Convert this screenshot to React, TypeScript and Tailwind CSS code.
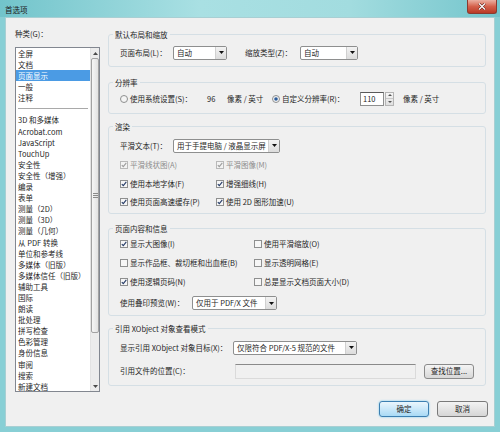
import type { ReactNode } from "react";

const categories = [
  "3D 和多媒体",
  "Acrobat.com",
  "JavaScript",
  "TouchUp",
  "安全性",
  "安全性（增强）",
  "编录",
  "表单",
  "测量（2D）",
  "测量（3D）",
  "测量（几何）",
  "从 PDF 转换",
  "单位和参考线",
  "多媒体（旧版）",
  "多媒体信任（旧版）",
  "辅助工具",
  "国际",
  "朗读",
  "批处理",
  "拼写检查",
  "色彩管理",
  "身份信息",
  "审阅",
  "搜索",
  "新建文档",
];

function Check({ checked, disabled }: { checked?: boolean; disabled?: boolean }) {
  return (
    <svg width="8" height="8" viewBox="0 0 8 8" className="shrink-0">
      <rect x="0.5" y="0.5" width="7" height="7" fill={disabled ? "#f3f3f3" : "#f6f6f6"} stroke={disabled ? "#b9b9b9" : "#8e8f8f"} />
      {checked && (
        <path d="M1.8 4.1 L3.3 5.7 L6.3 1.9" fill="none" stroke={disabled ? "#9c9c9c" : "#243a66"} strokeWidth="1.1" />
      )}
    </svg>
  );
}

function Radio({ checked }: { checked?: boolean }) {
  return (
    <svg width="8" height="8" viewBox="0 0 8 8" className="shrink-0">
      <circle cx="4" cy="4" r="3.5" fill="#f4f4f4" stroke="#8e8f8f" />
      {checked && <circle cx="4" cy="4" r="1.8" fill="#2d5d9c" />}
    </svg>
  );
}

function CheckItem({ label, checked, disabled }: { label: string; checked?: boolean; disabled?: boolean }) {
  return (
    <div className={`flex h-[12px] items-center gap-[2px] whitespace-nowrap ${disabled ? "text-[#8d8d8d]" : ""}`}>
      <Check checked={checked} disabled={disabled} />
      <span>{label}</span>
    </div>
  );
}

function Select({ value, className }: { value: string; className: string }) {
  return (
    <div className={`flex h-[14px] items-center rounded-[2px] border border-[#8e8f8f] bg-white ${className}`}>
      <span className="flex-1 overflow-hidden whitespace-nowrap pl-[3px]">{value}</span>
      <span className="flex h-full w-[11px] items-center justify-center border-l border-[#d0d0d0] bg-linear-to-b from-[#f3f3f3] to-[#dcdcdc]">
        <svg width="5" height="3" viewBox="0 0 5 3">
          <path d="M0 0H5L2.5 3z" fill="#111" />
        </svg>
      </span>
    </div>
  );
}

function Group({ title, className, children }: { title: string; className: string; children: ReactNode }) {
  return (
    <fieldset className={`rounded-[3px] border border-[#d5dfe5] px-[11px] ${className}`}>
      <legend className="-ml-[7px] px-[2px] leading-[11px] whitespace-nowrap">{title}</legend>
      {children}
    </fieldset>
  );
}

function Label({ children, className }: { children: ReactNode; className: string }) {
  return <span className={`shrink-0 whitespace-nowrap ${className}`}>{children}</span>;
}

export default function App() {
  return (
    <div className="flex h-[432px] w-[500px] flex-col overflow-hidden bg-[#88cfd5] font-['Noto_Sans_CJK_SC',sans-serif] text-[7.5px] text-[#1f1f1f]">
      {/* title bar */}
      <div className="flex h-[17px] shrink-0 items-start justify-between bg-[linear-gradient(90deg,#72c4cb_0%,#a9e0e3_40%,#a2dcdf_70%,#74c5cc_100%)]">
        <span className="pl-[5px] pt-[4px] leading-[11px] text-[#202020]">首选项</span>
        <div className="mr-[3px] flex h-[14px] w-[30px] items-center justify-center rounded-b-[3px] border border-t-0 border-[#8a3b30] bg-linear-to-b from-[#eab0a2] via-[#d4604a] to-[#b93a26]">
          <svg width="8" height="7" viewBox="0 0 8 7">
            <path d="M1 0.5L7 6.5M7 0.5L1 6.5" stroke="#5a1a12" strokeWidth="2.4" />
            <path d="M1 0.5L7 6.5M7 0.5L1 6.5" stroke="#fff" strokeWidth="1.3" />
          </svg>
        </div>
      </div>

      {/* body */}
      <div className="mx-[5px] mb-[5px] flex flex-1 border border-[#a8cfd3] bg-[#f0f0f0]">
        {/* left: categories */}
        <div className="flex flex-col pl-[9px] pt-[10px]">
          <span className="leading-[11px]">种类(G)：</span>
          <div className="mt-[8px] flex h-[345px] w-[85px] border border-[#828790] bg-white">
            <div className="flex-1 overflow-hidden leading-[11.1px]">
              {["全屏", "文档", "页面显示", "一般", "注释"].map((c) => (
                <div key={c} className={`whitespace-nowrap pl-[2px] ${c === "页面显示" ? "bg-[#4b9be4] text-white" : ""}`}>
                  {c}
                </div>
              ))}
              <div className="flex h-[11px] items-center px-[2px]">
                <div className="h-px w-full bg-[#a9a9a9]" />
              </div>
              {categories.map((c) => (
                <div key={c} className="whitespace-nowrap pl-[2px]">
                  {c}
                </div>
              ))}
            </div>
            <div className="flex w-[9px] flex-col border-l border-[#e3e3e3] bg-[#ececec]">
              <div className="flex h-[10px] items-center justify-center">
                <svg width="5" height="3" viewBox="0 0 5 3">
                  <path d="M2.5 0L5 3H0z" fill="#4a4a4a" />
                </svg>
              </div>
              <div className="flex h-[275px] items-center justify-center rounded-[2px] border border-[#a2a2a2] bg-linear-to-r from-[#f6f6f6] to-[#e2e2e2]">
                <svg width="5" height="5" viewBox="0 0 5 5">
                  <path d="M0 0.5H5M0 2.5H5M0 4.5H5" stroke="#8a8a8a" strokeWidth="1" />
                </svg>
              </div>
              <div className="flex-1" />
              <div className="flex h-[10px] items-center justify-center">
                <svg width="5" height="3" viewBox="0 0 5 3">
                  <path d="M0 0H5L2.5 3z" fill="#4a4a4a" />
                </svg>
              </div>
            </div>
          </div>
        </div>

        {/* right: settings */}
        <div className="ml-[8px] flex flex-1 flex-col pr-[12px] pt-[10.5px]">
          <Group title="默认布局和缩放" className="h-[38px]">
            <div className="flex items-center pt-[6px]">
              <Label className="w-[53px]">页面布局(L)：</Label>
              <Select value="自动" className="w-[54px]" />
              <Label className="ml-[18px] w-[55px]">缩放类型(Z)：</Label>
              <Select value="自动" className="w-[58px]" />
            </div>
          </Group>

          <Group title="分辨率" className="mt-[10px] h-[37px]">
            <div className="flex h-[14px] items-center pt-[0px] mt-[4px]">
              <Radio />
              <Label className="ml-[2px] w-[77px]">使用系统设置(S)：</Label>
              <Label className="w-[20px]">96</Label>
              <Label className="w-[45px]">像素 / 英寸</Label>
              <Radio checked />
              <Label className="ml-[2px] w-[78px]">自定义分辨率(R)：</Label>
              <div className="flex h-[14px] w-[24px] items-center border border-[#8e8f8f] border-t-[#5a5a5a] bg-white pl-[2px]">110</div>
              <div className="ml-[1px] flex h-[14px] w-[9px] flex-col border border-[#b5b5b5] bg-linear-to-b from-[#f6f6f6] to-[#e0e0e0]">
                <div className="flex flex-1 items-center justify-center border-b border-[#c8c8c8]">
                  <svg width="4" height="2" viewBox="0 0 4 2">
                    <path d="M2 0L4 2H0z" fill="#555" />
                  </svg>
                </div>
                <div className="flex flex-1 items-center justify-center">
                  <svg width="4" height="2" viewBox="0 0 4 2">
                    <path d="M0 0H4L2 2z" fill="#555" />
                  </svg>
                </div>
              </div>
              <Label className="ml-[9px]">像素 / 英寸</Label>
            </div>
          </Group>

          <Group title="渲染" className="mt-[7px] h-[93px]">
            <div className="flex items-center pt-[7px]">
              <Label className="w-[53px]">平滑文本(T)：</Label>
              <Select value="用于手提电脑 / 液晶显示屏" className="w-[107px]" />
            </div>
            <div className="mt-[6.5px] grid grid-cols-[96px_auto] gap-y-[6.5px]">
              <CheckItem label="平滑线状图(A)" checked disabled />
              <CheckItem label="平滑图像(M)" checked disabled />
              <CheckItem label="使用本地字体(F)" checked />
              <CheckItem label="增强细线(H)" checked />
              <CheckItem label="使用页面高速缓存(P)" checked />
              <CheckItem label="使用 2D 图形加速(U)" checked />
            </div>
          </Group>

          <Group title="页面内容和信息" className="mt-[9px] h-[93px]">
            <div className="grid grid-cols-[134px_auto] gap-y-[7px] pt-[4.5px]">
              <CheckItem label="显示大图像(I)" checked />
              <CheckItem label="使用平滑缩放(O)" />
              <CheckItem label="显示作品框、裁切框和出血框(B)" />
              <CheckItem label="显示透明网格(E)" />
              <CheckItem label="使用逻辑页码(N)" checked />
              <CheckItem label="总是显示文档页面大小(D)" />
            </div>
            <div className="mt-[8px] flex items-center">
              <Label className="w-[72px]">使用叠印预览(W)：</Label>
              <Select value="仅用于 PDF/X 文件" className="w-[85px]" />
            </div>
          </Group>

          <Group title="引用 XObject 对象查看模式" className="mt-[7.5px] h-[62.5px]">
            <div className="flex items-center pt-[6.5px]">
              <Label className="w-[113px]">显示引用 XObject 对象目标(X)：</Label>
              <Select value="仅限符合 PDF/X-5 规范的文件" className="w-[124px]" />
            </div>
            <div className="mt-[9px] flex items-center">
              <Label className="w-[115px]">引用文件的位置(C)：</Label>
              <div className="h-[15px] w-[181px] border border-[#dadada] border-t-[#8a8a8a] bg-[#f0f0f0]" />
              <button className="ml-[8px] h-[15px] w-[50px] rounded-[3px] border border-[#8a8a8a] bg-linear-to-b from-[#f4f4f4] to-[#d8d8d8] leading-none">
                查找位置...
              </button>
            </div>
          </Group>

          <div className="-mr-[2px] mt-[15px] flex justify-end gap-[8px]">
            <button className="h-[16px] w-[50px] rounded-[3px] border border-[#3c7fb1] bg-linear-to-b from-[#eaf6fd] to-[#a9daf5] leading-none shadow-[0_0_2px_#62c6f0]">
              确定
            </button>
            <button className="h-[16px] w-[51px] rounded-[3px] border border-[#7a7a7a] bg-linear-to-b from-[#f3f3f3] to-[#d6d6d6] leading-none">
              取消
            </button>
          </div>
        </div>
      </div>
    </div>
  );
}
